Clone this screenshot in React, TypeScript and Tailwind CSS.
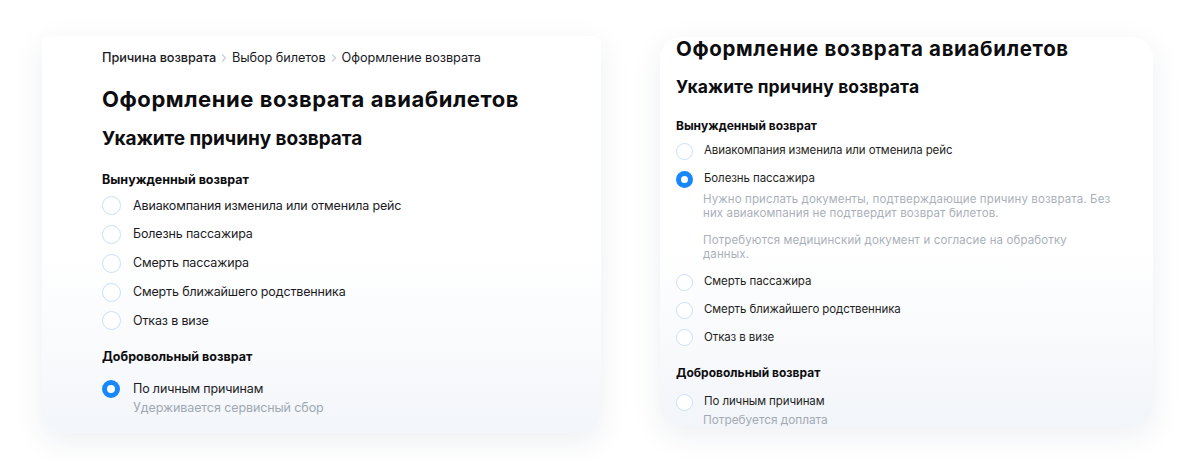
import React from "react";

function Radio({ checked, size = 18 }: { checked?: boolean; size?: number }) {
  if (checked) {
    return (
      <span
        className="shrink-0 rounded-full border-[5px] border-[#1787fb] bg-white"
        style={{ width: size, height: size }}
      />
    );
  }
  return (
    <span
      className="shrink-0 rounded-full border-[1.5px] border-[#cbdff8] bg-white"
      style={{ width: size, height: size }}
    />
  );
}

function Chevron() {
  return (
    <svg width="8" height="10" viewBox="0 0 8 10" className="mx-[4px]">
      <path d="M2.5 2 L5.5 5 L2.5 8" fill="none" stroke="#c9ced6" strokeWidth="1.4" strokeLinecap="round" strokeLinejoin="round" />
    </svg>
  );
}

const forced = [
  "Авиакомпания изменила или отменила рейс",
  "Болезнь пассажира",
  "Смерть пассажира",
  "Смерть ближайшего родственника",
  "Отказ в визе",
];

function LeftCard() {
  return (
    <div className="w-[559px] h-[397px] shrink-0 rounded-t-[8px] rounded-b-[20px] bg-gradient-to-b from-white from-[55%] to-[#f3f6fa] shadow-[0_8px_30px_rgba(30,50,90,0.08)] pl-[60px] pt-[12px] overflow-hidden">
      <div className="flex items-center h-[20px] text-[12.75px] text-[#1b1b1f] tracking-[-0.1px]">
        <span className="font-medium">Причина возврата</span>
        <Chevron />
        <span>Выбор билетов</span>
        <Chevron />
        <span>Оформление возврата</span>
      </div>
      <h1 className="mt-[17px] text-[22px] leading-[28px] font-bold text-[#0d0d10] tracking-[0.55px]">
        Оформление возврата авиабилетов
      </h1>
      <h2 className="mt-[14px] text-[19px] leading-[24px] font-bold text-[#0d0d10] tracking-[-0.05px]">
        Укажите причину возврата
      </h2>
      <div className="mt-[20px] text-[12.5px] leading-[18px] font-bold text-[#0d0d10]">Вынужденный возврат</div>
      <div className="mt-[2.5px] flex flex-col">
        {forced.map((t) => (
          <div key={t} className="h-[28.75px] flex items-center">
            <Radio size={19} />
            <span className="ml-[12px] text-[12.5px] text-[#1b1b1f] tracking-[-0.15px]">{t}</span>
          </div>
        ))}
      </div>
      <div className="mt-[13px] text-[12.5px] leading-[18px] font-bold text-[#0d0d10]">Добровольный возврат</div>
      <div className="mt-[13px] h-[20px] flex items-center">
        <Radio checked size={18} />
        <span className="ml-[13px] text-[12.5px] text-[#1b1b1f] tracking-[-0.15px]">По личным причинам</span>
      </div>
      <div className="pl-[31px] text-[12.5px] leading-[18px] text-[#a0a7b2] tracking-[-0.1px]">Удерживается сервисный сбор</div>
    </div>
  );
}

function RightRow({ label, checked, h = "h-[28px]" }: { label: string; checked?: boolean; h?: string }) {
  return (
    <div className={`${h} flex items-center`}>
      <Radio checked={checked} size={17} />
      <span className="ml-[11px] text-[11.5px] text-[#1f1f24] tracking-[-0.1px]">{label}</span>
    </div>
  );
}

function RightCard() {
  return (
    <div className="w-[493px] h-[390px] shrink-0 rounded-[22px] bg-gradient-to-b from-white from-[55%] to-[#f2f5f9] shadow-[0_8px_30px_rgba(30,50,90,0.08)] pl-[16px] overflow-hidden">
      <h1 className="text-[20.5px] leading-[24px] font-bold text-[#0d0d10] tracking-[0.65px]">
        Оформление возврата авиабилетов
      </h1>
      <h2 className="mt-[15px] text-[17.5px] leading-[22px] font-bold text-[#0d0d10] tracking-[0.1px]">
        Укажите причину возврата
      </h2>
      <div className="mt-[20px] text-[12px] leading-[16px] font-bold text-[#0d0d10]">Вынужденный возврат</div>
      <div className="mt-[3px]">
        <RightRow label="Авиакомпания изменила или отменила рейс" />
        <RightRow label="Болезнь пассажира" checked />
      </div>
      <div className="pl-[27px] pr-[30px] text-[11.5px] leading-[14px] text-[#aab0ba] tracking-[0.12px] -mt-[1px]">
        <p>
          Нужно прислать документы, подтверждающие причину возврата. Без
          <br />
          них авиакомпания не подтвердит возврат билетов.
        </p>
        <p className="mt-[13px]">
          Потребуются медицинский документ и согласие на обработку
          <br />
          данных.
        </p>
      </div>
      <div className="mt-[7px]">
        <RightRow label="Смерть пассажира" />
        <RightRow label="Смерть ближайшего родственника" />
        <RightRow label="Отказ в визе" h="h-[27px]" />
      </div>
      <div className="mt-[14px] text-[12px] leading-[16px] font-bold text-[#0d0d10]">Добровольный возврат</div>
      <div className="mt-[11px]">
        <RightRow label="По личным причинам" h="h-[20px]" />
      </div>
      <div className="pl-[27px] text-[11.8px] leading-[14px] text-[#a3aab5] mt-[1px]">Потребуется доплата</div>
    </div>
  );
}

export default function App() {
  return (
    <div className="w-[1200px] h-[467px] bg-white overflow-hidden" style={{ fontFamily: "Inter, 'Noto Sans', sans-serif" }}>
      <div className="flex items-start pt-[36px] pl-[42px] gap-[59px]">
        <LeftCard />
        <div className="mt-[1px]">
          <RightCard />
        </div>
      </div>
    </div>
  );
}
